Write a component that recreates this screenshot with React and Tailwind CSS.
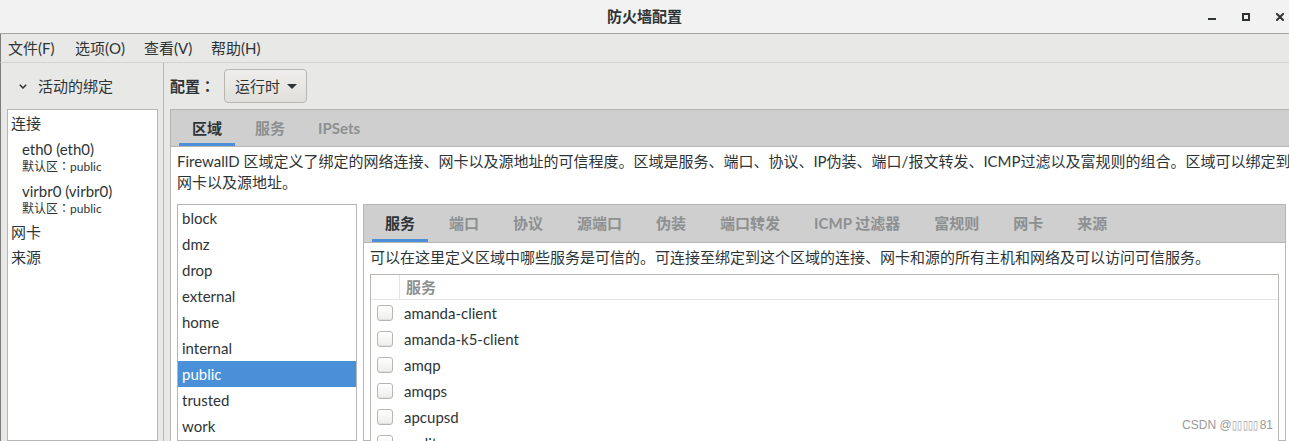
const FONT = "font-['Lato','Noto_Sans_CJK_SC',sans-serif]";
const COLON = "font-['Noto_Sans_CJK_TC',sans-serif]";

const MENUS = [
  { label: '文件(F)', w: 'w-[67px]' },
  { label: '选项(O)', w: 'w-[69px]' },
  { label: '查看(V)', w: 'w-[67px]' },
  { label: '帮助(H)', w: 'w-[67px]' },
];

const ZONES = ['block', 'dmz', 'drop', 'external', 'home', 'internal', 'public', 'trusted', 'work', 'libvirt'];

const INNER_TABS = ['服务', '端口', '协议', '源端口', '伪装', '端口转发', 'ICMP 过滤器', '富规则', '网卡', '来源'];

const SERVICES = ['amanda-client', 'amanda-k5-client', 'amqp', 'amqps', 'apcupsd', 'audit'];

function WindowControls() {
  return (
    <div className="flex items-center justify-end gap-[26px] pr-[5px] h-full">
      <svg width="8" height="8" viewBox="0 0 8 8">
        <rect x="0" y="5" width="8" height="2" fill="#2e3436" />
      </svg>
      <svg width="8" height="8" viewBox="0 0 8 8">
        <rect x="1" y="1" width="6" height="6" fill="none" stroke="#2e3436" strokeWidth="2" />
      </svg>
      <svg width="8" height="8" viewBox="0 0 8 8">
        <path d="M1 1 L7 7 M7 1 L1 7" stroke="#2e3436" strokeWidth="2" strokeLinecap="square" />
      </svg>
    </div>
  );
}

function Checkbox() {
  return (
    <div className="w-[16px] h-[16px] rounded-[3px] border border-[#b6b6b3] bg-gradient-to-b from-white to-[#ededec] shadow-[inset_0_-1px_0_#e0e0de]" />
  );
}

export default function App() {
  return (
    <div className={`relative w-[1289px] h-[441px] overflow-hidden bg-[#e8e8e7] flex flex-col text-[15px] text-[#2e3436] ${FONT}`}>
      {/* Title bar */}
      <div className="h-[34px] shrink-0 bg-[#f2f2f2] border-b border-[#a5a5a0] grid grid-cols-[1fr_auto_1fr] items-center">
        <div />
        <div className="font-bold">防火墙配置</div>
        <WindowControls />
      </div>

      {/* Menu bar */}
      <div className="h-[29px] shrink-0 border-b border-[#d3d3d1] border-l border-l-[#7d7d7d] flex items-center pl-[7px]">
        {MENUS.map((m) => (
          <div key={m.label} className={m.w}>{m.label}</div>
        ))}
      </div>

      <div className="flex-1 flex min-h-0 border-l border-l-[#7d7d7d]">
        {/* Left pane */}
        <div className="w-[163px] shrink-0 border-r border-[#b6b6b3] flex flex-col">
          <div className="h-[46px] shrink-0 flex items-center pl-[18px] gap-[11px]">
            <svg width="8" height="5" viewBox="0 0 8 5">
              <path d="M0.8 0.8 L4 4 L7.2 0.8" fill="none" stroke="#2e3436" strokeWidth="1.5" />
            </svg>
            <span>活动的绑定</span>
          </div>
          <div className="ml-[6px] w-[151px] flex-1 bg-white border border-[#b6b6b3]">
            <div className="h-[26px] leading-[26px] pl-[3px]">连接</div>
            {[
              ['eth0 (eth0)', 'public'],
              ['virbr0 (virbr0)', 'public'],
            ].map(([name, zone]) => (
              <div key={name} className="h-[42px] pt-[4px] pl-[14px]">
                <div className="leading-[18px]">{name}</div>
                <div className="leading-[16px] text-[12px]">
                  默认区<span className={COLON}>：</span>{zone}
                </div>
              </div>
            ))}
            <div className="h-[24px] leading-[24px] pl-[3px]">网卡</div>
            <div className="h-[26px] leading-[26px] pl-[3px]">来源</div>
          </div>
        </div>

        {/* Right pane */}
        <div className="flex-1 min-w-0 flex flex-col pl-[6px]">
          <div className="h-[46px] shrink-0 flex items-center">
            <span className="font-bold w-[54px]">
              配置<span className={COLON}>：</span>
            </span>
            <button className="h-[34px] w-[83px] rounded-[4px] border border-[#b6b6b3] bg-gradient-to-b from-[#efeeec] to-[#e0dfdc] flex items-center pl-[10px] gap-[7px]">
              <span>运行时</span>
              <svg width="10" height="5" viewBox="0 0 10 5">
                <polygon points="0,0 10,0 5,5" fill="#2e3436" />
              </svg>
            </button>
          </div>

          {/* Outer notebook */}
          <div className="flex-1 min-h-0 bg-white border-l border-t border-[#b6b6b3] flex flex-col">
            <div className="h-[37px] shrink-0 bg-[#cfcfcf] border-b border-[#b6b6b3] flex pl-[8px] gap-[7px]">
              <div className="px-[13px] h-full flex items-center font-bold border-b-[3px] border-[#4a90d9] pt-[3px]">区域</div>
              <div className="px-[13px] h-full flex items-center font-bold text-[#8d9091]">服务</div>
              <div className="px-[13px] h-full flex items-center font-bold text-[#8d9091]">IPSets</div>
            </div>

            <div className="flex-1 min-h-0 flex flex-col px-[6px] pt-[4px]">
              <div className="leading-[21px] whitespace-nowrap">
                FirewallD 区域定义了绑定的网络连接、网卡以及源地址的可信程度。区域是服务、端口、协议、IP伪装、端口/报文转发、ICMP过滤以及富规则的组合。区域可以绑定到
              </div>
              <div className="leading-[21px] whitespace-nowrap">网卡以及源地址。</div>

              <div className="mt-[11px] flex-1 min-h-0 flex gap-[6px]">
                {/* Zone list */}
                <div className="w-[180px] shrink-0 bg-white border border-[#b6b6b3]">
                  {ZONES.map((z) => (
                    <div
                      key={z}
                      className={
                        z === 'public'
                          ? 'h-[26px] leading-[26px] pl-[4px] bg-[#4a90d9] text-white'
                          : 'h-[26px] leading-[26px] pl-[4px]'
                      }
                    >
                      {z}
                    </div>
                  ))}
                </div>

                {/* Inner notebook */}
                <div className="w-[923px] shrink-0 border border-[#b6b6b3] flex flex-col">
                  <div className="h-[38px] shrink-0 bg-[#cfcfcf] border-b border-[#b6b6b3] flex pl-[8px] gap-[8px]">
                    {INNER_TABS.map((t, i) => (
                      <div
                        key={t}
                        className={
                          i === 0
                            ? 'px-[13px] h-full flex items-center font-bold border-b-[3px] border-[#4a90d9] pt-[3px] whitespace-nowrap'
                            : 'px-[13px] h-full flex items-center font-bold text-[#8d9091] whitespace-nowrap'
                        }
                      >
                        {t}
                      </div>
                    ))}
                  </div>
                  <div className="flex-1 min-h-0 px-[6px] pt-[4px] flex flex-col">
                    <div className="leading-[20px] whitespace-nowrap">
                      可以在这里定义区域中哪些服务是可信的。可连接至绑定到这个区域的连接、网卡和源的所有主机和网络及可以访问可信服务。
                    </div>
                    <div className="mt-[7px] flex-1 bg-white border border-[#b6b6b3]">
                      <div className="h-[25px] flex border-b border-[#e4e4e2]">
                        <div className="w-[29px] border-r border-[#e4e4e2]" />
                        <div className="pl-[6px] flex items-center font-bold text-[#8d9091]">服务</div>
                      </div>
                      {SERVICES.map((s) => (
                        <div key={s} className="h-[26px] flex items-center pl-[6px] gap-[11px]">
                          <Checkbox />
                          <span>{s}</span>
                        </div>
                      ))}
                    </div>
                  </div>
                </div>
              </div>
            </div>
          </div>
        </div>
      </div>

      <div className="absolute right-[16px] top-[417px] text-[12px] leading-[16px] text-[#9a9a9a] font-['Liberation_Sans',sans-serif] flex">
        <span>CSDN @</span>
        <span className="inline-block w-[28px] overflow-visible">
          <span className="inline-block whitespace-nowrap origin-left scale-x-[0.76]">▯▯▯▯▯</span>
        </span>
        <span>81</span>
      </div>
    </div>
  );
}
